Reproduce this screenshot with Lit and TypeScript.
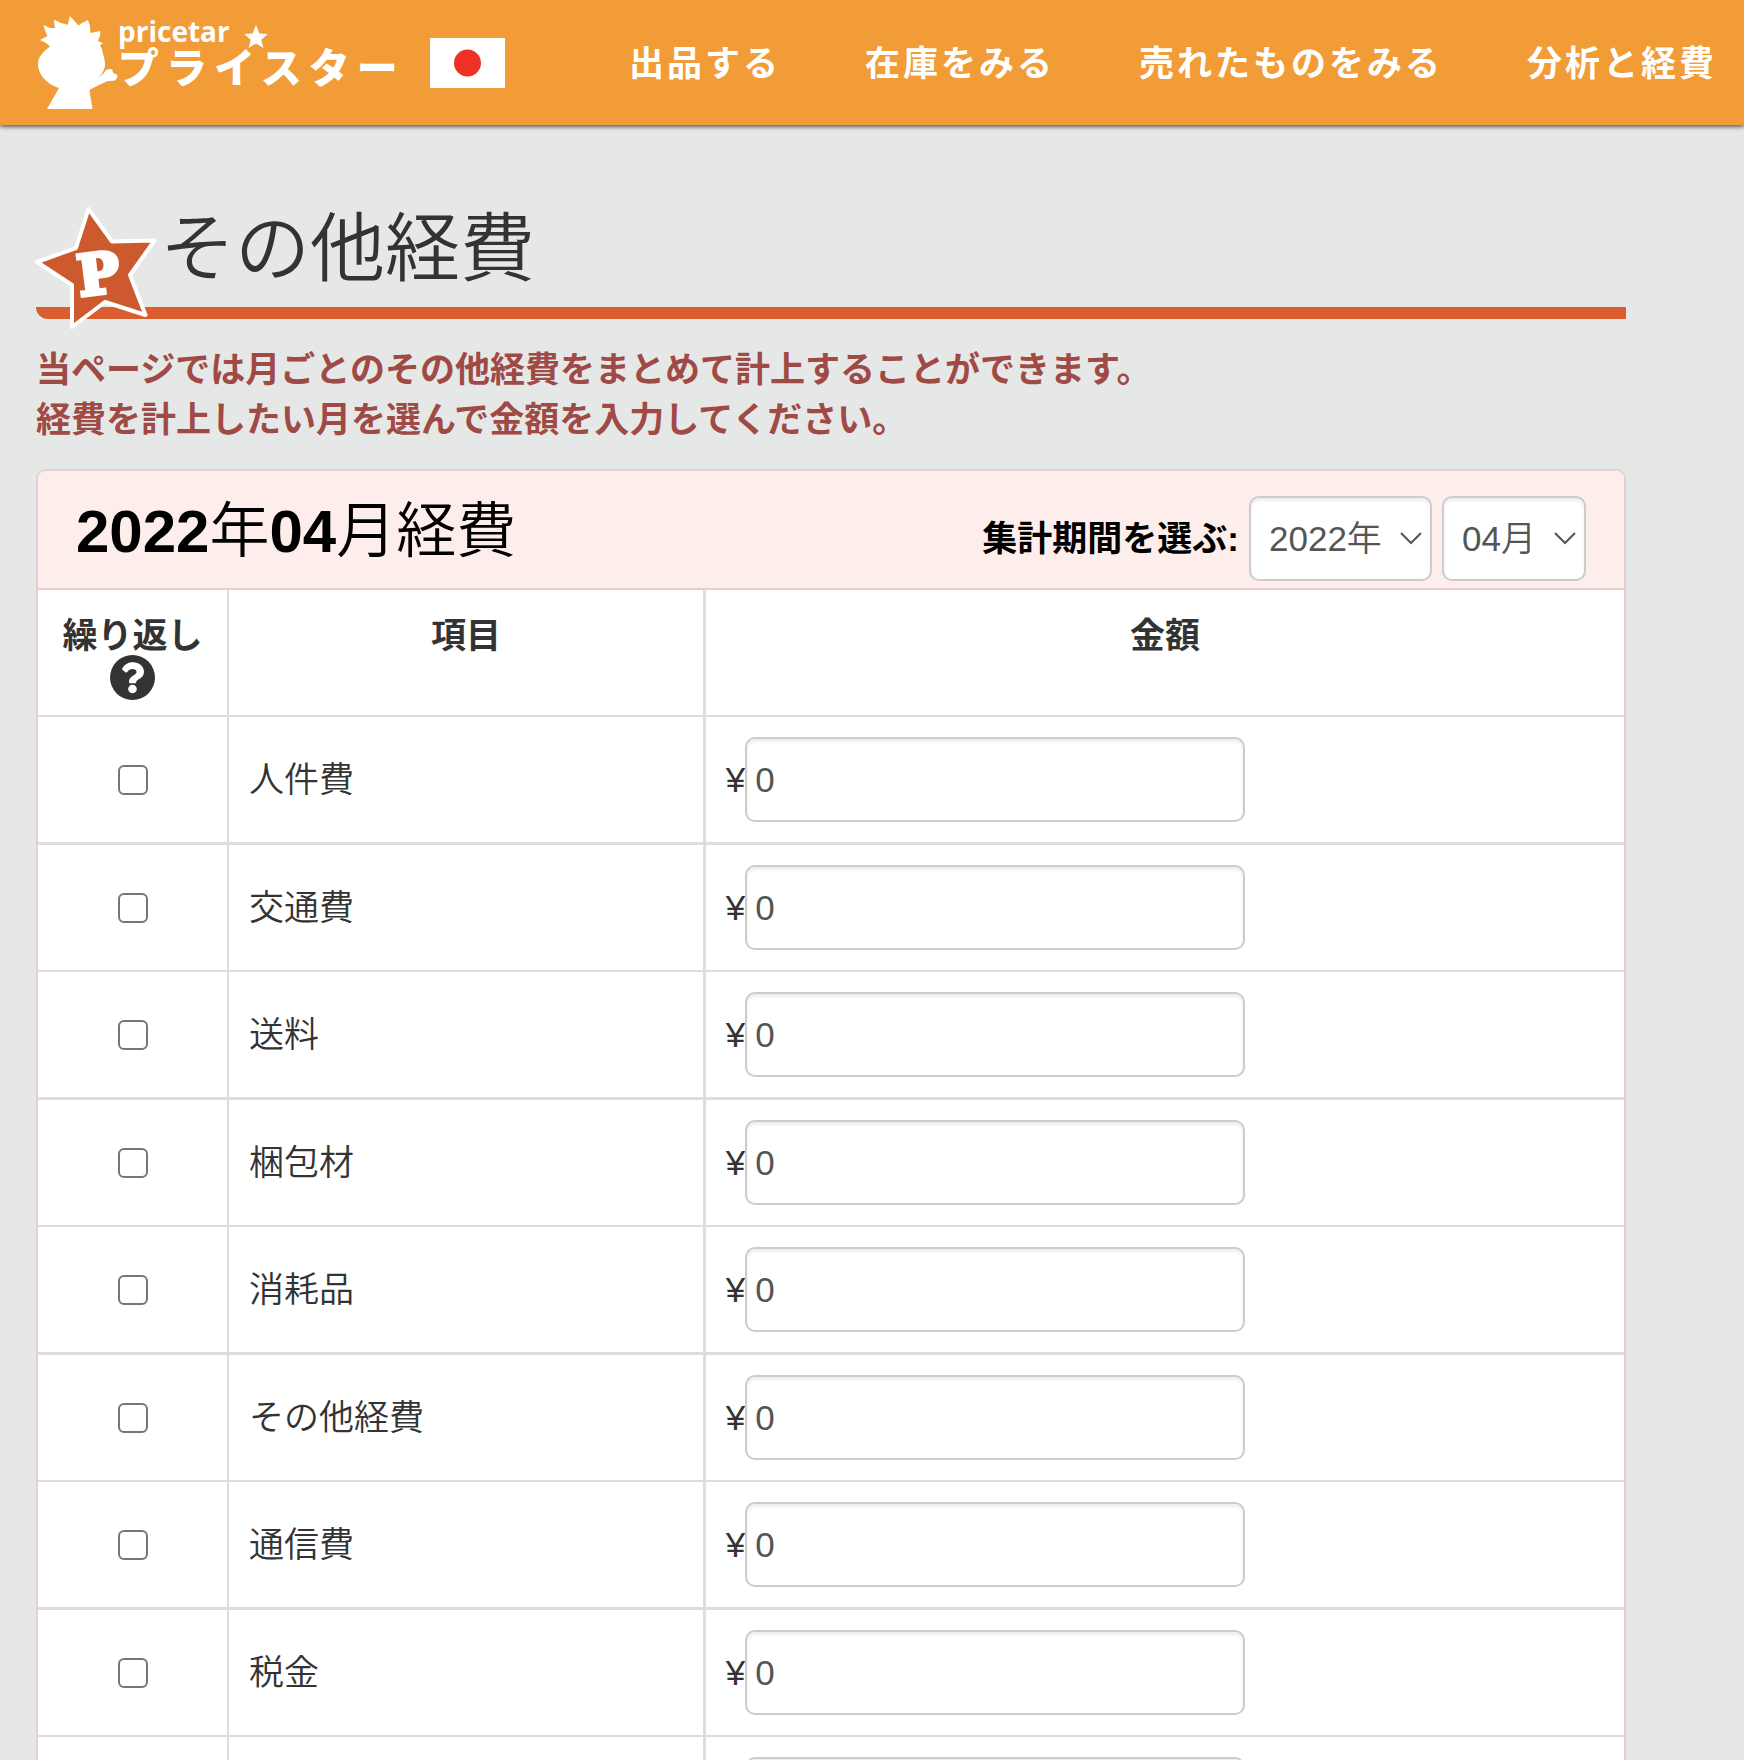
import { LitElement, html, css } from "lit";
import { customElement } from "lit/decorators.js";

const NAV = ["出品する", "在庫をみる", "売れたものをみる", "分析と経費"];
const ITEMS = ["人件費", "交通費", "送料", "梱包材", "消耗品", "その他経費", "通信費", "税金", ""];

@customElement("app-header")
class AppHeader extends LitElement {
  static styles = css`
    :host {
      display: block;
      position: relative;
    }
    .bar {
      display: flex;
      align-items: center;
      height: 125px;
      padding-left: 38px;
      background: #f29c38;
      box-shadow: 0 2px 4px rgba(0, 0, 0, 0.6);
    }
    .brand {
      display: flex;
    }
    .logo {
      display: block;
      overflow: visible;
    }
    .kana {
      font: 900 41px "Noto Sans CJK JP", sans-serif;
      letter-spacing: 7px;
    }
    .latin {
      font: 700 28px "Open Sans", sans-serif;
    }
    .flag {
      display: flex;
      margin-left: 32px;
      padding: 0;
      border: 0;
      background: none;
    }
    .nav {
      display: flex;
      gap: 84px;
      margin-left: 124px;
    }
    .link {
      padding-top: 2px;
      color: #fff;
      font-size: 35px;
      font-weight: 700;
      line-height: 50px;
      letter-spacing: 3px;
      text-decoration: none;
      white-space: nowrap;
    }
  `;

  render() {
    return html`
      <header class="bar">
        <a class="brand" href="#" aria-label="プライスター">
          <svg class="logo" width="360" height="94" viewBox="38 16 360 94" fill="#fff">
            <path
              d="M50 46.500 46 43l-6-3 7.500-4-2-4-2-7L50 28l5 0-1.200-8.500L61 23l7 1.700L69.700 16l4 4 4.800 5.500L82 23l6-3 2 6 .3 7 10.200-2-.5 4.500-2 5.500 4.800 2-2.800 2.500 2 3.500C103 55 105 59 105 64c0 5-2.500 10-6.500 13.500L103 74l3-4 3-1 3 .3 1.200 3.700 4.300 2-.5 3-2 2.500-8 .8L98 85.500 89.300 90 92.500 109H47L59 88C46 84 38 74 38 64c0-7 5-12 12-17.500z"
            />
            <text class="latin" x="118" y="42">pricetar</text>
            <path d="M256 25l3.300 8.500 8.700.6-6.700 5.600L263.500 48 256 43.500 248.500 48l2.200-8.300L244 34.100l8.700-.6z" />
            <text class="kana" x="118" y="83">プライスター</text>
          </svg>
        </a>
        <button class="flag" aria-label="日本">
          <svg width="75" height="50" viewBox="0 0 75 50">
            <rect width="75" height="50" fill="#fff" />
            <circle cx="37.500" cy="25" r="13.500" fill="#ed3124" />
          </svg>
        </button>
        <nav class="nav">${NAV.map((n) => html`<a class="link" href="#">${n}</a>`)}</nav>
      </header>
    `;
  }
}

@customElement("expense-panel")
class ExpensePanel extends LitElement {
  static styles = css`
    :host {
      display: block;
    }
    .panel {
      border: 2px solid #e8cdd1;
      border-radius: 10px;
      background: #fff;
      overflow: hidden;
    }
    .head {
      display: flex;
      align-items: flex-start;
      justify-content: space-between;
      height: 117px;
      padding: 0 38px;
      background: #fdeeeb;
      border-bottom: 2px solid #e8cdd1;
      color: #000;
    }
    .title {
      margin: 0;
      padding-top: 26px;
      font-size: 60px;
      font-weight: 350;
      line-height: 70px;
      white-space: nowrap;
    }
    .num {
      font-weight: 700;
    }
    .period {
      display: flex;
      align-items: center;
      gap: 10px;
      padding-top: 25px;
    }
    .period-label {
      font-weight: 700;
      white-space: nowrap;
    }
    .select {
      appearance: none;
      box-sizing: border-box;
      height: 85px;
      padding: 0 48px 0 18px;
      border: 2px solid #ccc;
      border-radius: 10px;
      color: #555;
      font: inherit;
      font-weight: 350;
      background: #fff
        url("data:image/svg+xml,%3Csvg xmlns='http://www.w3.org/2000/svg' width='22' height='13'%3E%3Cpath d='M1 1l10 10L21 1' fill='none' stroke='%23555' stroke-width='2'/%3E%3C/svg%3E")
        no-repeat right 8px center;
      box-shadow: inset 0 3px 3px rgba(0, 0, 0, 0.07);
    }
    .table {
      width: 100%;
      border-collapse: separate;
      border-spacing: 0;
      table-layout: fixed;
    }
    .col-repeat {
      width: 189px;
    }
    .col-item {
      width: 30%;
    }
    .th {
      height: 125px;
      box-sizing: content-box;
      padding: 0;
      border-bottom: 2px solid #ddd;
      vertical-align: top;
      font-weight: 700;
    }
    .th-text {
      display: block;
      padding-top: 21px;
      line-height: 50px;
    }
    .help {
      display: block;
      margin: -6px auto 0;
      padding: 0;
      border: 0;
      background: none;
      height: 45px;
    }
    .help-icon {
      display: block;
    }
    .td {
      height: 125px;
      padding: 0 20px;
      border-bottom: 2px solid #ddd;
      font-weight: 350;
      line-height: 50px;
    }
    .row:nth-child(odd) .td {
      border-bottom-width: 3px;
    }
    .th + .th,
    .td + .td {
      border-left: 2px solid #ddd;
    }
    .th + .th + .th,
    .td + .td + .td {
      border-left-width: 3px;
    }
    .name {
      display: block;
      padding-top: 1px;
    }
    .check {
      appearance: none;
      display: block;
      box-sizing: border-box;
      width: 30px;
      height: 30px;
      margin: 0 auto;
      border: 2px solid #767676;
      border-radius: 6px;
      background: #fff;
    }
    .check:checked {
      background: #d95d2e;
    }
    .money {
      display: flex;
      align-items: center;
      font-weight: 400;
    }
    .amount {
      box-sizing: border-box;
      width: 500px;
      height: 85px;
      padding: 0 8px;
      border: 2px solid #ccc;
      border-radius: 10px;
      color: #555;
      font: inherit;
      background: #fff;
      box-shadow: inset 0 3px 3px rgba(0, 0, 0, 0.07);
    }
  `;

  render() {
    return html`
      <section class="panel">
        <div class="head">
          <h2 class="title">
            <span class="num">2022</span>年<span class="num">04</span>月経費
          </h2>
          <div class="period">
            <label class="period-label" for="year">集計期間を選ぶ:</label>
            <select class="select" id="year"><option>2022年</option></select>
            <select class="select" id="month" aria-label="月"><option>04月</option></select>
          </div>
        </div>
        <table class="table">
          <colgroup>
            <col class="col-repeat" />
            <col class="col-item" />
            <col />
          </colgroup>
          <thead>
            <tr>
              <th class="th">
                <span class="th-text">繰り返し</span>
                <button class="help" aria-label="ヘルプ">
                  <svg class="help-icon" width="45" height="45" viewBox="0 0 45 45">
                    <circle cx="22.500" cy="22.500" r="22.500" fill="#333" />
                    <path
                      d="M12.300 13.200C15 9 18.500 7.200 23 7.200c6 0 11 4 11 9.600 0 7-7.800 7.500-7.800 10.100 0 .8-.5 1.300-1.300 1.300h-4.600c-.8 0-1.300-.5-1.300-1.300 0-6 7.600-6.600 7.600-9.800 0-2-1.900-3.200-4.100-3.200-2.400 0-3.700 1.100-5.300 3-.5.600-1.200.7-1.800.3l-2.800-2.200c-.5-.4-.7-1.200-.3-1.800z"
                      fill="#fff"
                    />
                    <circle cx="22.500" cy="34" r="4.300" fill="#fff" />
                  </svg>
                </button>
              </th>
              <th class="th"><span class="th-text">項目</span></th>
              <th class="th"><span class="th-text">金額</span></th>
            </tr>
          </thead>
          <tbody>
            ${ITEMS.map(
              (name, i) => html`
                <tr class="row">
                  <td class="td">
                    <input class="check" type="checkbox" aria-label="${name}繰り返し" />
                  </td>
                  <td class="td"><label class="name" for="amount-${i}">${name}</label></td>
                  <td class="td">
                    <div class="money">
                      <span>¥</span>
                      <input class="amount" id="amount-${i}" type="text" inputmode="numeric" value="0" />
                    </div>
                  </td>
                </tr>
              `
            )}
          </tbody>
        </table>
      </section>
    `;
  }
}

@customElement("app-root")
class AppRoot extends LitElement {
  static styles = css`
    :host {
      display: block;
      height: 100vh;
      overflow: hidden;
      background: #e5e8e6;
      color: #333;
      font-family: "Liberation Sans", "Noto Sans CJK JP", sans-serif;
      font-size: 35px;
      line-height: 50px;
    }
    .main {
      padding: 69px 118px 0 36px;
    }
    .heading {
      position: relative;
      margin: 0;
      padding: 0 0 3px 124px;
      border-bottom: 12px solid #d95d2e;
      border-bottom-left-radius: 12px;
      font-size: 75px;
      font-weight: 350;
      line-height: 110px;
    }
    .star {
      position: absolute;
      left: -3px;
      bottom: -24px;
    }
    .star-letter {
      font: 700 56px "DejaVu Serif", serif;
    }
    .lead {
      margin: 26px 0 24px;
      color: #a04a46;
      font-weight: 700;
    }
  `;

  render() {
    return html`
      <app-header></app-header>
      <main class="main">
        <h1 class="heading">
          <svg class="star" width="125" height="127" viewBox="33 204 125 127">
            <path
              d="M88.500 209 112 241.500l42.500-1L130 275l15.500 40L105 302l-33 25V285L37 262l39-14z"
              fill="#cd5a2f"
              stroke="#fff"
              stroke-width="4"
              stroke-linejoin="round"
            />
            <text class="star-letter" x="80" y="296" fill="#fff" stroke="#fff" stroke-width="4" transform="rotate(-7 80 296)">P</text>
          </svg>
          その他経費
        </h1>
        <p class="lead">
          当ページでは月ごとのその他経費をまとめて計上することができます。<br />経費を計上したい月を選んで金額を入力してください。
        </p>
        <expense-panel></expense-panel>
      </main>
    `;
  }
}
